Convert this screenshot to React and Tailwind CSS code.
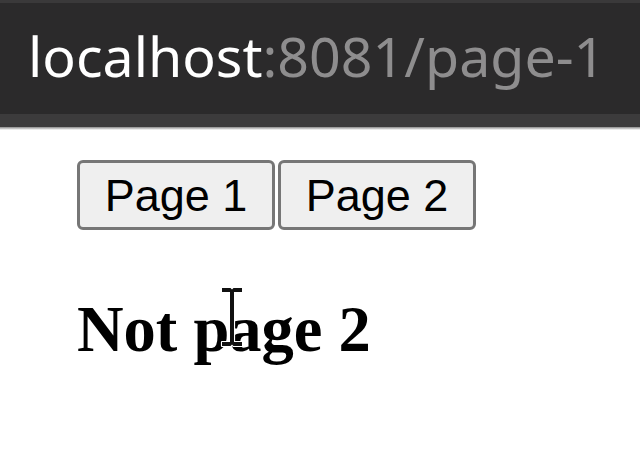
import React from 'react';

function IBeam() {
  return (
    <svg width="28" height="66" viewBox="0 0 28 66" className="absolute left-[218px] top-[284px]">
      <path
        d="M4 4h8.5l1.5 1.5 1.5-1.5H24v4h-8v50h8v4h-8.5L14 60.5 12.5 62H4v-4h8V8H4z"
        fill="#111"
        stroke="#fff"
        strokeWidth="2.2"
        strokeLinejoin="round"
        paintOrder="stroke"
      />
    </svg>
  );
}

export default function App() {
  return (
    <div className="relative w-[640px] h-[451px] bg-white overflow-hidden">
      {/* browser address bar */}
      <div className="bg-[#2b2a2b] border-t-[3px] border-[#3a393a]">
        <div className="h-[111px] flex items-center pl-[28px] pb-[6px] font-['Noto_Sans',sans-serif] text-[55.5px] leading-none">
          <span className="text-white">localhost</span>
          <span className="text-[#8e8d8e]">:8081/page-1</span>
        </div>
        <div className="h-[13px] bg-[#3c3b3c]" />
        <div className="h-[3px] bg-gradient-to-b from-[#8a8a8a] to-white" />
      </div>

      {/* page */}
      <div className="pl-[77px] pt-[30px] font-['Liberation_Sans',Arial,sans-serif]">
        <div className="flex gap-[3px]">
          <button className="w-[198px] h-[70px] rounded-[6px] border-[3px] border-[#767676] bg-[#efefef] text-[45px] text-black leading-none">
            Page 1
          </button>
          <button className="w-[198px] h-[70px] rounded-[6px] border-[3px] border-[#767676] bg-[#efefef] text-[45px] text-black leading-none">
            Page 2
          </button>
        </div>
        <h3 className="mt-[68px] font-['Liberation_Serif','Times_New_Roman',serif] font-bold text-[64.5px] leading-none text-black">
          Not page 2
        </h3>
      </div>

      <IBeam />
    </div>
  );
}
